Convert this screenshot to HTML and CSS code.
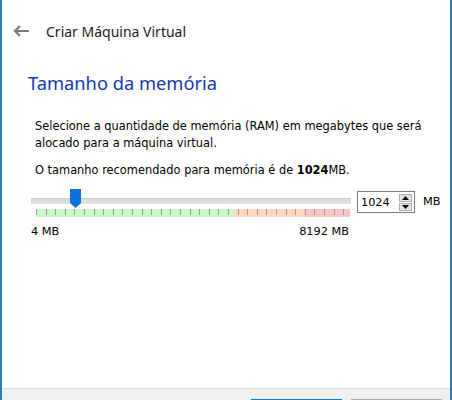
FILE: index.html
```html
<!DOCTYPE html>
<html lang="pt">
<head>
<meta charset="utf-8">
<title>Criar Máquina Virtual</title>
<link rel="stylesheet" href="styles.css">
</head>
<body>
<div class="window">
  <div class="header">
    <svg class="back" width="18" height="14" viewBox="0 0 18 14">
      <path d="M17 7H3M8 2L3 7l5 5" fill="none" stroke="#7a7a7a" stroke-width="2.2"/>
    </svg>
    <span class="title">Criar Máquina Virtual</span>
  </div>
  <div class="content">
    <h1 class="heading">Tamanho da memória</h1>
    <p class="desc">Selecione a quantidade de memória (RAM) em megabytes que será alocado para a máquina virtual.</p>
    <p class="rec">O tamanho recomendado para memória é de <b>1024</b>MB.</p>
    <div class="slider-row">
      <div class="slider">
        <div class="track">
          <svg class="thumb" width="11" height="19" viewBox="0 0 11 19">
            <path d="M0 0H11V14L5.5 19L0 14Z" fill="#0a74d6"/>
          </svg>
        </div>
        <div class="ticks">
          <div class="zone green"></div>
          <div class="zone orange"></div>
          <div class="zone red"></div>
        </div>
        <div class="scale">
          <span>4 MB</span>
          <span>8192 MB</span>
        </div>
      </div>
      <div class="spin">
        <span class="spin-value">1024</span>
        <span class="spin-btns">
          <span class="spin-btn"><svg width="7" height="4" viewBox="0 0 7 4"><path d="M0 4L3.5 0L7 4Z" fill="#000"/></svg></span>
          <span class="spin-btn"><svg width="7" height="4" viewBox="0 0 7 4"><path d="M0 0L3.5 4L7 0Z" fill="#000"/></svg></span>
        </span>
      </div>
      <span class="unit">MB</span>
    </div>
  </div>
  <div class="footer">
    <div class="btn primary"></div>
    <div class="btn"></div>
  </div>
</div>
</body>
</html>
```
FILE: styles.css
```css
html, body {
  margin: 0;
  padding: 0;
  background: #ffffff;
}
.window {
  width: 452px;
  height: 400px;
  box-sizing: border-box;
  border-left: 2px solid #2b7bbf;
  border-right: 2px solid #2b7bbf;
  display: flex;
  flex-direction: column;
  overflow: hidden;
}
.header {
  height: 62px;
  display: flex;
  align-items: center;
  padding-left: 10px;
  box-sizing: border-box;
}
.back {
  display: block;
}
.title {
  margin-left: 16px;
  font-family: "Noto Sans", "Open Sans", sans-serif;
  font-size: 14px;
  color: #1a1a1a;
}
.content {
  padding-left: 26px;
}
.heading {
  margin: 8px 0 0 0;
  font-family: "Noto Sans", "Open Sans", sans-serif;
  font-weight: normal;
  font-size: 18.3px;
  line-height: 26px;
  color: #1338b0;
}
.desc, .rec {
  font-family: "DejaVu Sans", Tahoma, sans-serif;
  font-size: 11.4px;
  line-height: 17px;
  color: #000;
  margin: 0 0 0 7px;
  width: 400px;
}
.desc {
  margin-top: 22px;
}
.rec {
  margin-top: 10px;
}
.slider-row {
  display: flex;
  align-items: flex-start;
  margin-top: 10px;
  margin-left: 3px;
}
.slider {
  width: 320px;
  display: flex;
  flex-direction: column;
}
.track {
  position: relative;
  height: 4px;
  margin-top: 9px;
  background: #dcdcdc;
  border-top: 1px solid #cfcfcf;
  border-bottom: 1px solid #e6e6e6;
}
.thumb {
  position: absolute;
  left: 39px;
  top: -10px;
}
.ticks {
  position: relative;
  display: flex;
  height: 8px;
  margin-top: 5px;
  margin-left: 5px;
  margin-right: 1px;
}
.zone {
  height: 8px;
}
.zone.green { width: 198px; background: #ccf7c6; }
.zone.orange { width: 70px; background: #fbd8c4; }
.zone.red { flex: 1; background: #fcc6c6; }
.ticks::after {
  content: "";
  position: absolute;
  left: 0; right: 0; top: 0;
  height: 6px;
  background-image: repeating-linear-gradient(to right, #9e9e9e 0, #9e9e9e 1px, transparent 1px, transparent 9.6px);
}
.scale {
  display: flex;
  justify-content: space-between;
  margin-top: 8px;
  font-family: "DejaVu Sans", Tahoma, sans-serif;
  font-size: 11.3px;
  line-height: 14px;
  color: #000;
  padding-right: 2px;
}
.spin {
  margin-left: 6px;
  margin-top: 2px;
  width: 58px;
  height: 22px;
  box-sizing: border-box;
  border: 1px solid #7a7a7a;
  display: flex;
  align-items: center;
  justify-content: space-between;
  padding-left: 3px;
  padding-right: 2px;
}
.spin-value {
  font-family: "DejaVu Sans", Tahoma, sans-serif;
  font-size: 11.3px;
  color: #000;
}
.spin-btns {
  display: flex;
  flex-direction: column;
  gap: 1px;
}
.spin-btn {
  width: 13px;
  height: 8px;
  background: #e6e6e6;
  border: 1px solid #adadad;
  box-sizing: border-box;
  display: flex;
  align-items: center;
  justify-content: center;
}
.spin-btn svg { display: block; }
.unit {
  margin-left: 8px;
  margin-top: 6px;
  font-family: "DejaVu Sans", Tahoma, sans-serif;
  font-size: 11.3px;
  color: #000;
}
.footer {
  margin-top: auto;
  height: 11px;
  background: #f0f0f0;
  border-top: 1px solid #dadada;
  display: flex;
  justify-content: flex-end;
  align-items: flex-end;
  gap: 9px;
  padding-right: 8px;
}
.btn {
  width: 91px;
  height: 1px;
  background: #adadad;
}
.btn.primary {
  background: #0a74d6;
}
```
